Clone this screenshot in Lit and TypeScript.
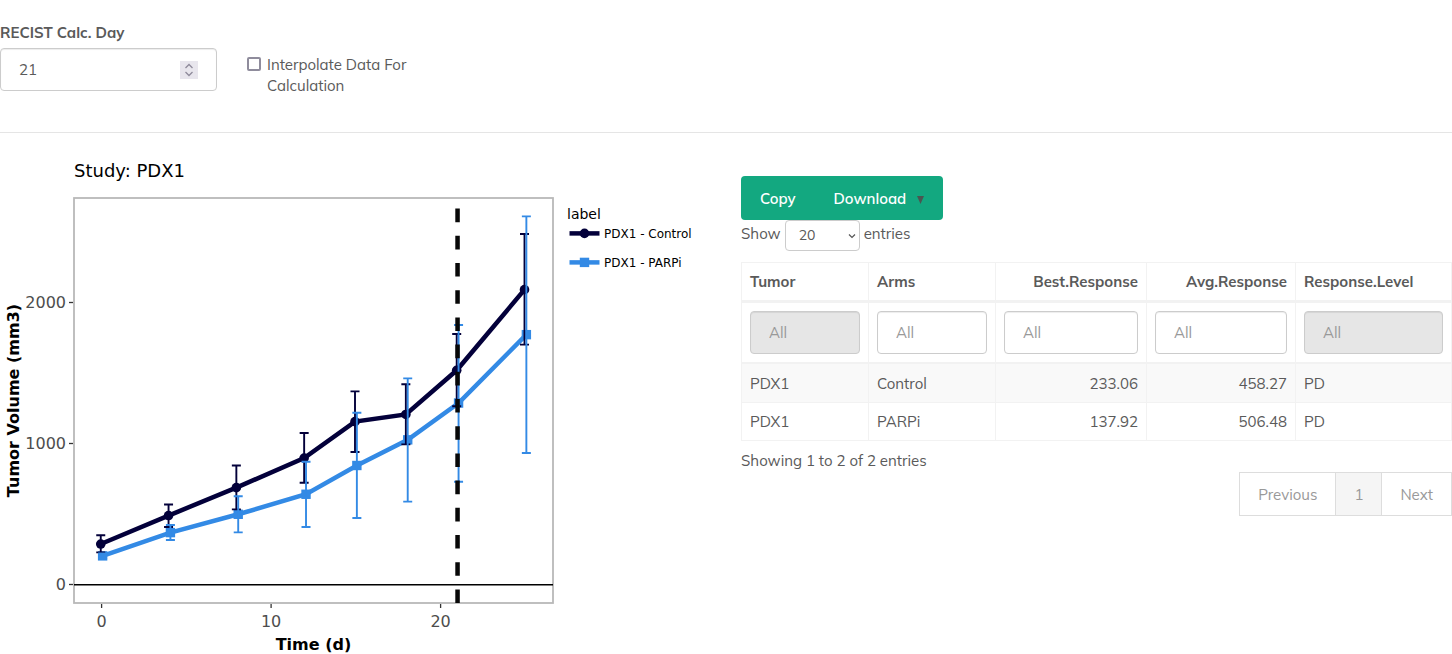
import { LitElement, html, svg, css } from "lit";
import { customElement, state } from "lit/decorators.js";

interface Obs {
  day: number;
  mean: number;
  low: number;
  high: number;
}

interface Series {
  name: string;
  color: string;
  shape: "circle" | "square";
  dodge: number;
  data: Obs[];
}

const SERIES: Series[] = [
  {
    name: "PDX1 - Control",
    color: "#03003a",
    shape: "circle",
    dodge: -0.05,
    data: [
      { day: 0, mean: 287, low: 228, high: 349 },
      { day: 4, mean: 489, low: 408, high: 567 },
      { day: 8, mean: 687, low: 533, high: 844 },
      { day: 12, mean: 897, low: 722, high: 1074 },
      { day: 15, mean: 1155, low: 940, high: 1370 },
      { day: 18, mean: 1206, low: 994, high: 1420 },
      { day: 21, mean: 1519, low: 1264, high: 1777 },
      { day: 25, mean: 2091, low: 1701, high: 2486 },
    ],
  },
  {
    name: "PDX1 - PARPi",
    color: "#338ae5",
    shape: "square",
    dodge: 0.06,
    data: [
      { day: 0, mean: 203, low: 185, high: 221 },
      { day: 4, mean: 368, low: 316, high: 422 },
      { day: 8, mean: 498, low: 370, high: 626 },
      { day: 12, mean: 640, low: 408, high: 871 },
      { day: 15, mean: 844, low: 472, high: 1218 },
      { day: 18, mean: 1026, low: 588, high: 1462 },
      { day: 21, mean: 1287, low: 729, high: 1840 },
      { day: 25, mean: 1772, low: 933, high: 2611 },
    ],
  },
];

@customElement("tumor-plot")
export class TumorPlot extends LitElement {
  static properties = { day: { type: Number } };
  declare day: number;

  static styles = css`
    :host {
      display: block;
    }
    .plot {
      display: block;
      width: 100%;
      height: auto;
      font-family: Verdana, "DejaVu Sans", sans-serif;
    }
    .title {
      font-size: 18px;
    }
    .tick {
      font-size: 16px;
      fill: #4d4d4d;
    }
    .axis {
      font-size: 16px;
      font-weight: 700;
    }
    .legend-title {
      font-size: 14px;
    }
    .legend-item {
      font-size: 12px;
    }
  `;

  constructor() {
    super();
    this.day = 21;
  }

  private x(day: number) {
    return 101.6 + day * 16.95;
  }

  private y(volume: number) {
    return 431.5 - volume * 0.141;
  }

  private marker(s: Series, x: number, y: number) {
    return s.shape === "circle"
      ? svg`<circle cx=${x} cy=${y} r="4.8" fill=${s.color}></circle>`
      : svg`<rect x=${x - 4.7} y=${y - 4.7} width="9.4" height="9.4" fill=${s.color}></rect>`;
  }

  private line(s: Series) {
    const at = s.data.map((o) => [this.x(o.day + s.dodge), this.y(o.mean)]);
    return svg`
      <polyline points=${at.map((p) => p.join(",")).join(" ")} fill="none" stroke=${s.color} stroke-width="4.5"></polyline>
      ${at.map(([x, y]) => this.marker(s, x, y))}`;
  }

  private bars(s: Series) {
    return s.data.map((o) => {
      const x = this.x(o.day + s.dodge);
      const top = this.y(o.high);
      const bottom = this.y(o.low);
      return svg`<path d=${`M${x - 4.5} ${top}H${x + 4.5}M${x} ${top}V${bottom}M${x - 4.5} ${bottom}H${x + 4.5}`} fill="none" stroke=${s.color} stroke-width="1.9"></path>`;
    });
  }

  render() {
    return html`
      <svg class="plot" viewBox="0 0 711 501" role="img" aria-label="Tumor volume over time, study PDX1">
        <text class="title" x="74" y="24">Study: PDX1</text>
        <rect x="74" y="45" width="479" height="405" fill="none" stroke="#b9b9b9" stroke-width="1.8"></rect>
        ${SERIES.map((s) => this.line(s))}
        ${SERIES.map((s) => this.bars(s))}
        <path d="M74 431.7H553" stroke="#000" stroke-width="1.4"></path>
        <path d=${`M${this.x(this.day)} 450V45`} stroke="#080808" stroke-width="4.5" stroke-dasharray="13.6 13.6"></path>
        ${[0, 1000, 2000].map(
          (v) => svg`
            <path d=${`M69 ${this.y(v)}H73`} stroke="#333" stroke-width="1.3"></path>
            <text class="tick" x="66" y=${this.y(v) + 5.8} text-anchor="end">${v}</text>`
        )}
        ${[0, 10, 20].map(
          (d) => svg`
            <path d=${`M${this.x(d)} 451V455`} stroke="#333" stroke-width="1.3"></path>
            <text class="tick" x=${this.x(d)} y="474" text-anchor="middle">${d}</text>`
        )}
        <text class="axis" x="313.5" y="497" text-anchor="middle">Time (d)</text>
        <text class="axis" transform="translate(19 247.5) rotate(-90)" text-anchor="middle">Tumor Volume (mm3)</text>
        <text class="legend-title" x="567" y="66">label</text>
        ${SERIES.map((s, i) => {
          const y = 80.4 + i * 29;
          return svg`
            <path d=${`M569.5 ${y}H599.5`} stroke=${s.color} stroke-width="4.5"></path>
            ${this.marker(s, 584.5, y)}
            <text class="legend-item" x="604" y=${y + 4.6}>${s.name}</text>`;
        })}
      </svg>
    `;
  }
}

interface Column {
  key: string;
  numeric: boolean;
  locked: boolean;
}

const COLUMNS: Column[] = [
  { key: "Tumor", numeric: false, locked: true },
  { key: "Arms", numeric: false, locked: false },
  { key: "Best.Response", numeric: true, locked: false },
  { key: "Avg.Response", numeric: true, locked: false },
  { key: "Response.Level", numeric: false, locked: true },
];

const ROWS = [
  ["PDX1", "Control", "233.06", "458.27", "PD"],
  ["PDX1", "PARPi", "137.92", "506.48", "PD"],
];

@customElement("response-table")
export class ResponseTable extends LitElement {
  static styles = css`
    :host {
      display: block;
      padding-top: 23px;
    }
    .buttons {
      display: inline-flex;
      vertical-align: top;
      border-radius: 4px;
      background: #13a880;
    }
    .btn {
      display: flex;
      align-items: baseline;
      gap: 11px;
      padding: 13px 19px 11px;
      border: 0;
      background: none;
      color: #fff;
      font: inherit;
      line-height: 20px;
      font-weight: 600;
    }
    .caret {
      width: 7px;
      height: 8px;
      fill: #4a5651;
    }
    .length {
      display: flex;
      align-items: flex-start;
      gap: 4px;
      line-height: 28px;
    }
    .select-box {
      display: grid;
      width: 75px;
      align-items: center;
    }
    .select-box > * {
      grid-area: 1 / 1;
    }
    .select {
      appearance: none;
      box-sizing: border-box;
      width: 100%;
      height: 31px;
      padding: 0 13px 2px;
      border: 1px solid #ccc;
      border-radius: 4px;
      background: #fff;
      color: #5a5a5a;
      font: inherit;
      font-size: 14px;
    }
    .chevron {
      justify-self: end;
      width: 8px;
      height: 6px;
      margin-right: 4px;
      fill: none;
      stroke: #555;
      pointer-events: none;
    }
    .table {
      width: 100%;
      margin-top: 11px;
      border-spacing: 0;
      table-layout: fixed;
      border-top: 1px solid #f2f2f2;
      border-left: 1px solid #f2f2f2;
    }
    .c0,
    .c1 {
      width: 127px;
    }
    .c2 {
      width: 151px;
    }
    .c3 {
      width: 149px;
    }
    .c4 {
      width: 156px;
    }
    .cell {
      box-sizing: border-box;
      padding: 8px;
      border-right: 1px solid #f2f2f2;
      border-bottom: 1px solid #f2f2f2;
      text-align: left;
      line-height: 21px;
    }
    .head {
      border-bottom-width: 3px;
    }
    .filter-cell {
      border-bottom-width: 2px;
    }
    .num {
      text-align: right;
    }
    .odd {
      background: #f9f9f9;
    }
    .odd .cell {
      padding-top: 9px;
    }
    .filter {
      display: block;
      box-sizing: border-box;
      width: 100%;
      height: 43px;
      padding: 0 18px;
      border: 1px solid #ccc;
      border-radius: 4px;
      background: #fff;
      box-shadow: inset 0 1px 1px rgba(0, 0, 0, 0.075);
      font: inherit;
    }
    .filter::placeholder {
      color: #999;
      opacity: 1;
    }
    .filter:disabled {
      background: #e6e6e6;
    }
    .info {
      margin: 9px 0 0;
      line-height: 22px;
    }
    .pager {
      display: flex;
      width: fit-content;
      margin-left: auto;
      border: 1px solid #ddd;
    }
    .page {
      height: 42px;
      padding: 0 18px;
      border: 0;
      border-left: 1px solid #ddd;
      background: #fff;
      color: #999;
      font: inherit;
    }
    .page:first-child {
      border-left: 0;
    }
    .current {
      background: #f5f5f5;
    }
  `;

  render() {
    return html`
      <div class="buttons">
        <button class="btn" type="button">Copy</button>
        <button class="btn" type="button">
          Download
          <svg class="caret" viewBox="0 0 7 8" aria-hidden="true"><path d="M0 0H7L3.5 8Z"></path></svg>
        </button>
      </div>
      <div class="length">
        <label for="length">Show</label>
        <span class="select-box">
          <select class="select" id="length">
            <option>20</option>
            <option>50</option>
            <option>100</option>
          </select>
          <svg class="chevron" viewBox="0 0 8 6" aria-hidden="true"><path d="M1 1.5 4 4.5 7 1.5" stroke-width="1.2"></path></svg>
        </span>
        <label for="length">entries</label>
      </div>
      <table class="table">
        <colgroup>
          ${COLUMNS.map((_, i) => html`<col class="c${i}" />`)}
        </colgroup>
        <thead>
          <tr>
            ${COLUMNS.map((c) => html`<th class="cell head ${c.numeric ? "num" : ""}" scope="col">${c.key}</th>`)}
          </tr>
          <tr>
            ${COLUMNS.map(
              (c) => html`<td class="cell filter-cell">
                <input class="filter" type="search" placeholder="All" aria-label="Filter ${c.key}" ?disabled=${c.locked} />
              </td>`
            )}
          </tr>
        </thead>
        <tbody>
          ${ROWS.map(
            (row, r) => html`<tr class=${r % 2 ? "even" : "odd"}>
              ${row.map((v, i) => html`<td class="cell ${COLUMNS[i].numeric ? "num" : ""}">${v}</td>`)}
            </tr>`
          )}
        </tbody>
      </table>
      <p class="info">Showing 1 to 2 of 2 entries</p>
      <nav class="pager" aria-label="Table pages">
        <button class="page" type="button">Previous</button>
        <button class="page current" type="button">1</button>
        <button class="page" type="button">Next</button>
      </nav>
    `;
  }
}

@customElement("app-root")
export class AppRoot extends LitElement {
  @state() private day = 21;

  static styles = css`
    :host {
      display: block;
      background: #fff;
      color: #5a5a5a;
      font-family: Muli, Mulish, Nunito, Lato, sans-serif;
      font-size: 15px;
      line-height: 21px;
    }
    .controls {
      display: grid;
      grid-template-columns: repeat(6, minmax(0, 1fr));
      column-gap: 30px;
      padding: 22px 0 41px;
      border-bottom: 1px solid #e5e5e5;
    }
    .label {
      display: block;
      margin-bottom: 5px;
      font-weight: 700;
    }
    .number {
      display: flex;
      align-items: center;
      box-sizing: border-box;
      height: 43px;
      padding: 0 18px;
      border: 1px solid #ccc;
      border-radius: 4px;
      box-shadow: inset 0 1px 1px rgba(0, 0, 0, 0.075);
    }
    .number-input {
      flex: 1;
      min-width: 0;
      padding: 0;
      border: 0;
      outline: 0;
      background: none;
      color: inherit;
      font: inherit;
      appearance: textfield;
    }
    .number-input::-webkit-inner-spin-button {
      display: none;
    }
    .spinner {
      width: 18px;
      height: 18px;
      background: #e8e6ed;
      fill: none;
      stroke: #8f8b9b;
      stroke-width: 1.3;
    }
    .check {
      display: flex;
      align-items: flex-start;
      gap: 6px;
      height: 69px;
      box-sizing: border-box;
      padding-top: 32px;
    }
    .box {
      appearance: none;
      box-sizing: border-box;
      flex: none;
      width: 14px;
      height: 14px;
      margin: 3px 0 0;
      border: 2px solid #8f8c9c;
      border-radius: 2px;
      background: #fff;
    }
    .box:checked {
      background: #13a880;
    }
    .results {
      display: grid;
      grid-template-columns: 1fr 1fr;
      column-gap: 30px;
      padding-top: 20px;
    }
  `;

  render() {
    return html`
      <form class="controls">
        <div>
          <label class="label" for="day">RECIST Calc. Day</label>
          <div class="number">
            <input
              class="number-input"
              id="day"
              type="number"
              .value=${String(this.day)}
              @input=${(e: Event) => (this.day = Number((e.target as HTMLInputElement).value))}
            />
            <svg class="spinner" viewBox="0 0 18 18" aria-hidden="true">
              <path d="M5.5 7 9 3.5 12.5 7M5.5 11 9 14.5 12.5 11"></path>
            </svg>
          </div>
        </div>
        <div class="check">
          <input class="box" id="interpolate" type="checkbox" />
          <label for="interpolate">Interpolate Data For Calculation</label>
        </div>
      </form>
      <main class="results">
        <tumor-plot .day=${this.day}></tumor-plot>
        <response-table></response-table>
      </main>
    `;
  }
}
